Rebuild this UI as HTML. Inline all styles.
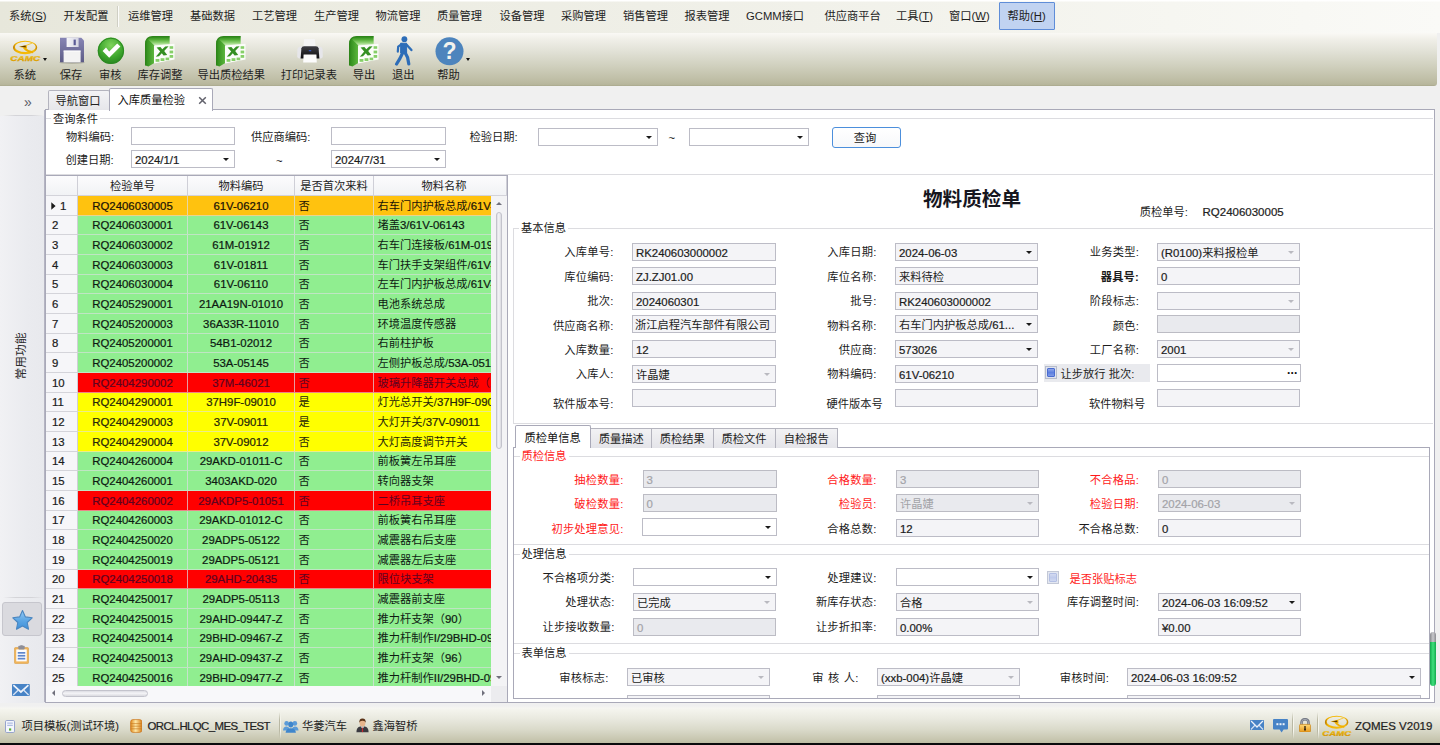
<!DOCTYPE html>
<html lang="zh-CN"><head><meta charset="utf-8"><title>入库质量检验</title>
<style>
*{box-sizing:border-box;margin:0;padding:0}
html,body{width:1440px;height:745px;overflow:hidden;background:#f0f0f0}
body{font-family:"Liberation Sans","Noto Sans CJK SC",sans-serif;font-size:11.25px;color:#222;line-height:1}
#app{position:relative;width:1440px;height:745px;overflow:hidden;background:#f0f0f0}
.a{position:absolute;white-space:nowrap}
.n{font-size:11.4px;-webkit-text-stroke:.22px}
.t{position:absolute;white-space:nowrap;height:16px;line-height:16px}
.r{text-align:right}
.c{text-align:center}
/* menu */
#menubar{left:0;top:0;width:1440px;height:33px;background:linear-gradient(180deg,#fff 0,#fff 1px,rgba(255,255,255,.5) 1px,rgba(255,255,255,.5) 2px,rgba(255,255,255,0) 2px),linear-gradient(90deg,#e7e7db 0%,#ecece2 25%,#efefe7 45%,#f4f4ee 72%,#fafaf7 100%)}
.mi{top:8px;height:16px;line-height:16px;font-size:11.25px;color:#1e1e1e}
#toolbar{left:0;top:33px;width:1437px;height:53px;background:linear-gradient(180deg,#faf9f5 0%,#f0efe8 12%,#e1e1d6 35%,#d0d0be 62%,#bfbea6 88%,#b7b69c 97%,#a9a88c 100%);border-bottom-right-radius:3px}
.tl{top:67px;height:16px;line-height:16px;font-size:11.25px;color:#1e1e1e;text-align:center}
/* inputs */
.in{position:absolute;height:18px;border:1px solid #bcbcc6;background:#f4f4f7;font-size:11.4px;line-height:16px;padding-top:1px;padding-left:3px;-webkit-text-stroke:.2px;white-space:nowrap;overflow:hidden;color:#1c1c1c}
.in.w{background:#fff}
.in.d{background:#e9eaee;color:#a3a3a8;border-color:#bcbcc4}
.in .cj{font-size:11.25px;-webkit-text-stroke:0}
.ar{position:absolute;right:5px;top:7px;width:0;height:0;border-left:3px solid transparent;border-right:3px solid transparent;border-top:3.5px solid #1a1a1a}
.ar.g{border-top-color:#b9b9c0}
.lb{position:absolute;height:16px;line-height:16px;white-space:nowrap;text-align:right;color:#1c1c1c;letter-spacing:.2px}
.red{color:#ff1a1a}
.gl{position:absolute;height:1px;background:#dcdce0}
.gv{position:absolute;width:1px;background:#dcdce0}
.gt{position:absolute;height:14px;line-height:14px;background:#fff;padding:0 2px;white-space:nowrap}
/* grid */
.gh{position:absolute;top:176px;height:20px;line-height:21px;text-align:center;background:linear-gradient(180deg,#fcfcfd,#f1f2f5);border-right:1px solid #cfcfd7;border-bottom:1px solid #d3d3da}
.row{position:absolute;left:46px;width:445px}
.cell{position:absolute;top:0;height:100%;white-space:nowrap;overflow:hidden;border-right:1px solid rgba(222,222,228,.7);border-bottom:1px solid rgba(222,222,228,.6)}
.ind{background:#f6f6f9;border-right:1px solid #cfcfd6;border-bottom:1px solid #d4d4da;padding-left:6px;font-size:11.4px;-webkit-text-stroke:.22px}

</style></head>
<body>
<div id="app">
<div class="a" id="menubar"></div>
<div class="a mi" style="left:9px">系统(<u>S</u>)</div>
<div class="a mi" style="left:63.5px">开发配置</div>
<div class="a mi" style="left:128px">运维管理</div>
<div class="a mi" style="left:190px">基础数据</div>
<div class="a mi" style="left:252px">工艺管理</div>
<div class="a mi" style="left:314px">生产管理</div>
<div class="a mi" style="left:375.5px">物流管理</div>
<div class="a mi" style="left:437px">质量管理</div>
<div class="a mi" style="left:499.5px">设备管理</div>
<div class="a mi" style="left:561px">采购管理</div>
<div class="a mi" style="left:623px">销售管理</div>
<div class="a mi" style="left:684.5px">报表管理</div>
<div class="a mi" style="left:746px">GCMM接口</div>
<div class="a mi" style="left:824.5px">供应商平台</div>
<div class="a mi" style="left:896px">工具(<u>T</u>)</div>
<div class="a mi" style="left:949px">窗口(<u>W</u>)</div>
<div class="a" style="left:117px;top:6px;width:1px;height:21px;background:#cfcfc4"></div><div class="a" style="left:118px;top:6px;width:1px;height:21px;background:#fcfcfa"></div>
<div class="a" style="left:999px;top:2px;width:56px;height:28px;background:#c1d3f1;border:1px solid #5f8dd8;border-radius:1px"></div>
<div class="a mi" style="left:1007.5px">帮助(<u>H</u>)</div>
<div class="a" id="toolbar"></div>
<div class="a tl" style="left:-25.2px;width:100px">系统</div>
<div class="a tl" style="left:21.1px;width:100px">保存</div>
<div class="a tl" style="left:60.2px;width:100px">审核</div>
<div class="a tl" style="left:110px;width:100px">库存调整</div>
<div class="a tl" style="left:181.3px;width:100px">导出质检结果</div>
<div class="a tl" style="left:258.8px;width:100px">打印记录表</div>
<div class="a tl" style="left:314px;width:100px">导出</div>
<div class="a tl" style="left:353.3px;width:100px">退出</div>
<div class="a tl" style="left:398.4px;width:100px">帮助</div>
<div class="a" style="left:43.3px;top:58.3px;width:0;height:0;border-left:2.6px solid transparent;border-right:2.6px solid transparent;border-top:3.2px solid #111"></div>
<div class="a" style="left:465.7px;top:58.3px;width:0;height:0;border-left:2.6px solid transparent;border-right:2.6px solid transparent;border-top:3.2px solid #111"></div>
<svg class="a" style="left:9px;top:40.2px" width="32" height="22" viewBox="0 0 32 22"><defs><linearGradient id="c1g" x1="0" y1="0" x2="0" y2="1"><stop offset="0" stop-color="#ffe26a"/><stop offset=".45" stop-color="#f5bb0a"/><stop offset="1" stop-color="#d18c00"/></linearGradient><linearGradient id="c1h" x1="0" y1="0" x2="1" y2="0"><stop offset="0" stop-color="#b87800"/><stop offset=".12" stop-color="#f2b400"/><stop offset=".85" stop-color="#f6be10"/><stop offset="1" stop-color="#c88600"/></linearGradient></defs><path fill-rule="evenodd" fill="url(#c1h)" d="M4 7.45 A12.1 6.75 0 1 0 28.2 7.45 A12.1 6.75 0 1 0 4 7.45 Z M5.9 6.9 A10.4 5.2 0 1 1 26.7 6.9 A10.4 5.2 0 1 1 5.9 6.9 Z"/><path d="M15.2 8 Q18.4 11.6 23.4 12.2" fill="none" stroke="#f0b000" stroke-width="1.9" stroke-linecap="round"/><path d="M17.2 5.4 L23.6 2.9" fill="none" stroke="#f3c640" stroke-width="1"/><path d="M9.6 6.7 L17.6 4.9 L18.1 8.5 Z" fill="#f0b000"/><path d="M10.8 6.6 L16.6 5.6 L16.9 7.6 Z" fill="#5e3a00"/><text x="16.3" y="21.3" text-anchor="middle" font-family="Liberation Sans,sans-serif" font-weight="bold" font-style="italic" font-size="6.8" textLength="30" lengthAdjust="spacingAndGlyphs" fill="url(#c1g)" stroke="#d49a00" stroke-width=".25">CAMC</text></svg>
<svg class="a" style="left:58.5px;top:36.8px" width="26" height="27" viewBox="0 0 26 27"><defs><linearGradient id="fl" x1="0" y1="0" x2="0" y2="1"><stop offset="0" stop-color="#8785b5"/><stop offset="1" stop-color="#5c5b85"/></linearGradient><linearGradient id="fl2" x1="0" y1="0" x2="1" y2="0"><stop offset="0" stop-color="#f6f6fa"/><stop offset="1" stop-color="#d5d5e2"/></linearGradient></defs><ellipse cx="13" cy="25.6" rx="13" ry="1.3" fill="#8c8b7a" opacity=".45"/><path d="M1 0.8 H22.3 L25 3.5 V25.3 H1 Z" fill="url(#fl)"/><rect x="7.6" y="0.8" width="12" height="9.2" fill="url(#fl2)"/><rect x="14.6" y="2.6" width="2.2" height="5.6" fill="#5a5a96"/><rect x="4.6" y="13.6" width="17" height="11.7" fill="#f3f3f3"/><rect x="4.6" y="13.6" width="17" height="1" fill="#fff"/></svg>
<svg class="a" style="left:96.6px;top:37px" width="28" height="28" viewBox="0 0 28 28"><defs><radialGradient id="gc" cx=".5" cy=".3" r=".75"><stop offset="0" stop-color="#7fd45c"/><stop offset=".6" stop-color="#3da62d"/><stop offset="1" stop-color="#237f1d"/></radialGradient></defs><circle cx="13.9" cy="13.8" r="13.2" fill="url(#gc)"/><circle cx="13.9" cy="13.8" r="12.6" fill="none" stroke="#2c8a22" stroke-width="1"/><path d="M5.6 14 L9 10.6 L12.2 14.6 L20.2 6.4 L23.4 9.4 L12.2 20.8 Z" fill="#fff"/></svg>
<svg class="a" style="left:145px;top:35.5px" width="30" height="31" viewBox="0 0 30 31"><defs><linearGradient id="xa145" x1="0" y1="0" x2="1" y2="0"><stop offset="0" stop-color="#2f8a1c"/><stop offset=".3" stop-color="#55b038"/><stop offset=".6" stop-color="#8fd272"/><stop offset="1" stop-color="#e4f5da"/></linearGradient><linearGradient id="xb145" x1="0" y1="0" x2="0" y2="1"><stop offset="0" stop-color="#2f8a1c"/><stop offset=".3" stop-color="#4faa33"/><stop offset=".65" stop-color="#8fd272"/><stop offset="1" stop-color="#e4f5da"/></linearGradient></defs><path d="M0.6 29.4 V8 Q0.6 0.6 8 0.6 H24.6 V10 H11 V26 L3.4 30.6 Z" fill="url(#xa145)"/><path d="M3.2 3.4 Q5 0.6 8 0.6 H24.6 V10 H10 Z" fill="url(#xb145)"/><path d="M0.6 29.4 V8 Q0.6 0.6 8 0.6 H24.6" fill="none" stroke="#2d8519" stroke-width="1.2"/><path d="M9 9.6 L29.5 7.8 V23.6 L9 27.6 Z" fill="#fbfdf9"/><path d="M11.6 11.4 L15.4 11 L17.3 13.2 L20.2 10.5 L23.6 10.2 L19.2 14.9 L22.2 19 L18.6 19.5 L16.8 17.2 L14 20.2 L10.8 20.7 L15.2 15.6 Z" fill="#348f22"/><g fill="#86cf68"><rect x="24.6" y="10.2" width="3.6" height="2.6"/><rect x="24.6" y="14.6" width="3.6" height="2.8"/><rect x="24.6" y="19" width="3.6" height="2.8"/><rect x="10.6" y="23" width="3.8" height="2.8"/><rect x="15.6" y="22.2" width="3.8" height="2.8"/><rect x="20.6" y="21.6" width="3.6" height="2.6"/></g></svg>
<svg class="a" style="left:216px;top:35.5px" width="30" height="31" viewBox="0 0 30 31"><defs><linearGradient id="xa216" x1="0" y1="0" x2="1" y2="0"><stop offset="0" stop-color="#2f8a1c"/><stop offset=".3" stop-color="#55b038"/><stop offset=".6" stop-color="#8fd272"/><stop offset="1" stop-color="#e4f5da"/></linearGradient><linearGradient id="xb216" x1="0" y1="0" x2="0" y2="1"><stop offset="0" stop-color="#2f8a1c"/><stop offset=".3" stop-color="#4faa33"/><stop offset=".65" stop-color="#8fd272"/><stop offset="1" stop-color="#e4f5da"/></linearGradient></defs><path d="M0.6 29.4 V8 Q0.6 0.6 8 0.6 H24.6 V10 H11 V26 L3.4 30.6 Z" fill="url(#xa216)"/><path d="M3.2 3.4 Q5 0.6 8 0.6 H24.6 V10 H10 Z" fill="url(#xb216)"/><path d="M0.6 29.4 V8 Q0.6 0.6 8 0.6 H24.6" fill="none" stroke="#2d8519" stroke-width="1.2"/><path d="M9 9.6 L29.5 7.8 V23.6 L9 27.6 Z" fill="#fbfdf9"/><path d="M11.6 11.4 L15.4 11 L17.3 13.2 L20.2 10.5 L23.6 10.2 L19.2 14.9 L22.2 19 L18.6 19.5 L16.8 17.2 L14 20.2 L10.8 20.7 L15.2 15.6 Z" fill="#348f22"/><g fill="#86cf68"><rect x="24.6" y="10.2" width="3.6" height="2.6"/><rect x="24.6" y="14.6" width="3.6" height="2.8"/><rect x="24.6" y="19" width="3.6" height="2.8"/><rect x="10.6" y="23" width="3.8" height="2.8"/><rect x="15.6" y="22.2" width="3.8" height="2.8"/><rect x="20.6" y="21.6" width="3.6" height="2.6"/></g></svg>
<svg class="a" style="left:349.2px;top:35.5px" width="30" height="31" viewBox="0 0 30 31"><defs><linearGradient id="xa349" x1="0" y1="0" x2="1" y2="0"><stop offset="0" stop-color="#2f8a1c"/><stop offset=".3" stop-color="#55b038"/><stop offset=".6" stop-color="#8fd272"/><stop offset="1" stop-color="#e4f5da"/></linearGradient><linearGradient id="xb349" x1="0" y1="0" x2="0" y2="1"><stop offset="0" stop-color="#2f8a1c"/><stop offset=".3" stop-color="#4faa33"/><stop offset=".65" stop-color="#8fd272"/><stop offset="1" stop-color="#e4f5da"/></linearGradient></defs><path d="M0.6 29.4 V8 Q0.6 0.6 8 0.6 H24.6 V10 H11 V26 L3.4 30.6 Z" fill="url(#xa349)"/><path d="M3.2 3.4 Q5 0.6 8 0.6 H24.6 V10 H10 Z" fill="url(#xb349)"/><path d="M0.6 29.4 V8 Q0.6 0.6 8 0.6 H24.6" fill="none" stroke="#2d8519" stroke-width="1.2"/><path d="M9 9.6 L29.5 7.8 V23.6 L9 27.6 Z" fill="#fbfdf9"/><path d="M11.6 11.4 L15.4 11 L17.3 13.2 L20.2 10.5 L23.6 10.2 L19.2 14.9 L22.2 19 L18.6 19.5 L16.8 17.2 L14 20.2 L10.8 20.7 L15.2 15.6 Z" fill="#348f22"/><g fill="#86cf68"><rect x="24.6" y="10.2" width="3.6" height="2.6"/><rect x="24.6" y="14.6" width="3.6" height="2.8"/><rect x="24.6" y="19" width="3.6" height="2.8"/><rect x="10.6" y="23" width="3.8" height="2.8"/><rect x="15.6" y="22.2" width="3.8" height="2.8"/><rect x="20.6" y="21.6" width="3.6" height="2.6"/></g></svg>
<svg class="a" style="left:295.5px;top:37.5px" width="28" height="26" viewBox="0 0 28 26"><defs><linearGradient id="pr" x1="0" y1="0" x2="0" y2="1"><stop offset="0" stop-color="#3d3d42"/><stop offset="1" stop-color="#0d0d10"/></linearGradient></defs><path d="M8.2 1 H18.8 L19.8 10 H7.2 Z" fill="#f4f4f4"/><path d="M1.4 11.6 Q1.8 8.8 5 8.6 L23 8.6 Q26.2 8.8 26.6 11.6 L26.8 18.4 Q26.6 20.4 24.4 20.4 H3.6 Q1.4 20.4 1.2 18.4 Z" fill="#e6e6ea"/><path d="M5.4 10.2 Q5.8 8.2 8 8.2 H20 Q22.2 8.2 22.6 10.2 L23.4 20.6 H4.6 Z" fill="url(#pr)"/><rect x="12.8" y="12.2" width="2.4" height="1" fill="#3b62d8"/><path d="M7.6 16.6 H20.4 L20.8 24.6 H7.2 Z" fill="#fcfcfc"/></svg>
<svg class="a" style="left:393.5px;top:35.5px" width="20" height="30" viewBox="0 0 20 30"><g fill="#2d6db8" stroke="#2d6db8" stroke-linejoin="round" stroke-linecap="round"><circle cx="10.4" cy="3.2" r="2.9" stroke="none"/><path d="M7 7.2 H12.6 V17 H7 Z" stroke-width="1"/><path d="M7.6 8.2 L4.2 10.6 L3.8 15.6" fill="none" stroke-width="2.2"/><path d="M12.6 8.8 L17.4 14" fill="none" stroke-width="2.4"/><path d="M8.6 17 L6 22.4 L2.6 28" fill="none" stroke-width="3.2"/><path d="M11 16.6 L13.6 21.6 L14.8 28" fill="none" stroke-width="3.2"/></g></svg>
<svg class="a" style="left:434.5px;top:36.5px" width="29" height="29" viewBox="0 0 29 29"><circle cx="14.5" cy="14.3" r="14" fill="#4d84bd"/><text x="14.5" y="22.4" text-anchor="middle" font-family="Liberation Sans,sans-serif" font-weight="bold" font-size="23" fill="#f3f3ee">?</text></svg>
<div class="a" style="left:0;top:116px;width:45px;height:587px;background:linear-gradient(90deg,#f1f1f4,#eaebef 60%,#e8e9ed)"></div>
<div class="a" style="left:44px;top:110px;width:1px;height:592px;background:#b4b4c2"></div>
<div class="a" style="left:24px;top:94px;font-size:14px;color:#5a5a66;height:16px;line-height:16px">»</div>
<div class="a" style="left:3px;top:115px;width:41px;height:1px;background:linear-gradient(90deg,rgba(210,210,214,0),#d4d4d8 30%,#d4d4d8 70%,rgba(210,210,214,0))"></div>
<div class="a" style="left:3px;top:597px;width:41px;height:1px;background:linear-gradient(90deg,rgba(210,210,214,0),#d4d4d8 30%,#d4d4d8 70%,rgba(210,210,214,0))"></div>
<div class="a" style="left:-4px;top:348px;width:50px;height:16px;line-height:16px;text-align:center;transform:rotate(-90deg);font-size:11.7px;color:#2a2a2a">常用功能</div>
<div class="a" style="left:2px;top:602px;width:40px;height:34px;background:#dadadf;border:1px solid #c6c6cd;border-radius:3px"></div>
<svg class="a" style="left:10.5px;top:608.5px" width="23" height="22" viewBox="0 0 23 22"><defs><linearGradient id="st" x1="0" y1="0" x2="0" y2="1"><stop offset="0" stop-color="#95c9f3"/><stop offset=".55" stop-color="#5aa5e4"/><stop offset="1" stop-color="#3f8fd8"/></linearGradient></defs><path d="M11.5 1.6 L14.4 7.9 L21.2 8.8 L16.2 13.5 L17.5 20.2 L11.5 16.9 L5.5 20.2 L6.8 13.5 L1.8 8.8 L8.6 7.9 Z" fill="url(#st)" stroke="#4a86c0" stroke-width="1.1" stroke-linejoin="round"/></svg>
<svg class="a" style="left:14.2px;top:644.5px" width="15" height="19" viewBox="0 0 16 19" preserveAspectRatio="none"><rect x="0.5" y="2.6" width="15" height="16" rx="1" fill="#f0b45a" stroke="#d79a3e" stroke-width=".6"/><rect x="2.4" y="4.4" width="11.2" height="12" fill="#fbfbfd"/><rect x="4.6" y="0.8" width="6.8" height="3.6" rx=".8" fill="#8f8f98"/><rect x="6.6" y="0.2" width="2.8" height="1.6" rx=".6" fill="#8f8f98"/><g fill="#5f86cc"><rect x="4" y="7" width="8" height="1.7"/><rect x="4" y="9.9" width="8" height="1.7"/><rect x="4" y="12.8" width="8" height="1.7"/></g></svg>
<svg class="a" style="left:12.4px;top:684px" width="17.8" height="12" viewBox="0 0 18 12" preserveAspectRatio="none"><rect x="0" y="0" width="18" height="12" rx=".9" fill="#4783c6"/><path d="M1.4 1.2 L9 8 L16.6 1.2" fill="none" stroke="#eef3fb" stroke-width="1.7"/><path d="M1.2 11 L6.6 5.8 M16.8 11 L11.4 5.8" fill="none" stroke="#d5e2f4" stroke-width="1.4"/></svg>
<div class="a" style="left:45px;top:109px;width:1389.5px;height:594px;background:#fff;border:1px solid #a9a9b8"></div>
<div class="a" style="left:48px;top:90px;width:62px;height:20px;background:linear-gradient(180deg,#f3f3f5,#e6e6ea);border:1px solid #b4b4be;border-bottom:none;border-radius:2px 2px 0 0"></div>
<div class="t" style="left:55.5px;top:92.5px">导航窗口</div>
<div class="a" style="left:109px;top:88px;width:104px;height:23px;background:#fff;border:1px solid #a9a9b8;border-bottom:none;border-radius:2px 2px 0 0"></div>
<div class="t" style="left:117.5px;top:91.5px;color:#111">入库质量检验</div>
<svg class="a" style="left:197.5px;top:95.5px" width="9" height="9" viewBox="0 0 9 9"><path d="M1.2 1.2 L7.8 7.8 M7.8 1.2 L1.2 7.8" stroke="#62626c" stroke-width="1.5" fill="none"/></svg>
<div class="gl" style="left:46px;top:118px;width:1387px"></div>
<div class="gl" style="left:46px;top:174px;width:1387px"></div>
<div class="gt" style="left:51px;top:111.5px">查询条件</div>
<div class="t" style="left:66px;top:129px">物料编码:</div>
<div class="in w" style="left:131px;top:127px;width:104px"></div>
<div class="t" style="left:251px;top:129px">供应商编码:</div>
<div class="in w" style="left:331px;top:127px;width:115px"></div>
<div class="t" style="left:469.5px;top:129px">检验日期:</div>
<div class="in w" style="left:538px;top:127.5px;width:120px"><i class="ar"></i></div>
<div class="t" style="left:668.5px;top:130px">~</div>
<div class="in w" style="left:689px;top:127.5px;width:119.5px"><i class="ar"></i></div>
<div class="a" style="left:832px;top:127px;width:69px;height:21px;border:1px solid #4c8fdc;border-radius:3px;background:linear-gradient(180deg,#fff,#f7f8fa);text-align:center;line-height:20px;padding-right:3px">查询</div>
<div class="t" style="left:65.5px;top:152px">创建日期:</div>
<div class="in w" style="left:131px;top:150px;width:104px">2024/1/1<i class="ar"></i></div>
<div class="t" style="left:276px;top:153px">~</div>
<div class="in w" style="left:331px;top:150px;width:115px">2024/7/31<i class="ar"></i></div>
<div class="a" style="left:45px;top:175px;width:463px;height:527.5px;background:#fff;border:1px solid #a9a9b8"></div>
<div class="gh" style="left:46px;width:32px"></div>
<div class="gh" style="left:78px;width:110px">检验单号</div>
<div class="gh" style="left:188px;width:107px">物料编码</div>
<div class="gh" style="left:295px;width:79px">是否首次来料</div>
<div class="gh" style="left:374px;width:133px;padding-left:8px">物料名称</div>
<div class="row" style="top:196px;height:20px;line-height:20px;color:#1a1206"><div class="cell ind" style="left:0;width:32px;color:#1c1c1c"><svg width="5" height="8" viewBox="0 0 5 8" style="position:absolute;left:5px;top:5.5px"><path d="M0.3 0.3 L4.6 4 L0.3 7.7 Z" fill="#1a1a1a"/></svg><span style="padding-left:8px">1</span></div><div class="cell n c" style="left:32px;width:110px;background:#ffc20f">RQ2406030005</div><div class="cell n c" style="left:142px;width:107px;background:#ffc20f">61V-06210</div><div class="cell" style="left:249px;width:79px;background:#ffc20f;padding-left:3.5px">否</div><div class="cell" style="left:328px;width:117px;background:#ffc20f;padding-left:3.5px;border-right:none">右车门内护板总成/<span class=n>61V-06210</span></div></div>
<div class="row" style="top:216px;height:19px;line-height:19px;color:#0e1a12"><div class="cell ind" style="left:0;width:32px;color:#1c1c1c">2</div><div class="cell n c" style="left:32px;width:110px;background:#90ee90">RQ2406030001</div><div class="cell n c" style="left:142px;width:107px;background:#90ee90">61V-06143</div><div class="cell" style="left:249px;width:79px;background:#90ee90;padding-left:3.5px">否</div><div class="cell" style="left:328px;width:117px;background:#90ee90;padding-left:3.5px;border-right:none">堵盖<span class=n>3/61V-06143</span></div></div>
<div class="row" style="top:235px;height:20px;line-height:20px;color:#0e1a12"><div class="cell ind" style="left:0;width:32px;color:#1c1c1c">3</div><div class="cell n c" style="left:32px;width:110px;background:#90ee90">RQ2406030002</div><div class="cell n c" style="left:142px;width:107px;background:#90ee90">61M-01912</div><div class="cell" style="left:249px;width:79px;background:#90ee90;padding-left:3.5px">否</div><div class="cell" style="left:328px;width:117px;background:#90ee90;padding-left:3.5px;border-right:none">右车门连接板/<span class=n>61M-01912</span></div></div>
<div class="row" style="top:255px;height:20px;line-height:20px;color:#0e1a12"><div class="cell ind" style="left:0;width:32px;color:#1c1c1c">4</div><div class="cell n c" style="left:32px;width:110px;background:#90ee90">RQ2406030003</div><div class="cell n c" style="left:142px;width:107px;background:#90ee90">61V-01811</div><div class="cell" style="left:249px;width:79px;background:#90ee90;padding-left:3.5px">否</div><div class="cell" style="left:328px;width:117px;background:#90ee90;padding-left:3.5px;border-right:none">车门扶手支架组件/<span class=n>61V-01811</span></div></div>
<div class="row" style="top:275px;height:19px;line-height:19px;color:#0e1a12"><div class="cell ind" style="left:0;width:32px;color:#1c1c1c">5</div><div class="cell n c" style="left:32px;width:110px;background:#90ee90">RQ2406030004</div><div class="cell n c" style="left:142px;width:107px;background:#90ee90">61V-06110</div><div class="cell" style="left:249px;width:79px;background:#90ee90;padding-left:3.5px">否</div><div class="cell" style="left:328px;width:117px;background:#90ee90;padding-left:3.5px;border-right:none">左车门内护板总成/<span class=n>61V-06110</span></div></div>
<div class="row" style="top:294px;height:20px;line-height:20px;color:#0e1a12"><div class="cell ind" style="left:0;width:32px;color:#1c1c1c">6</div><div class="cell n c" style="left:32px;width:110px;background:#90ee90">RQ2405290001</div><div class="cell n c" style="left:142px;width:107px;background:#90ee90">21AA19N-01010</div><div class="cell" style="left:249px;width:79px;background:#90ee90;padding-left:3.5px">否</div><div class="cell" style="left:328px;width:117px;background:#90ee90;padding-left:3.5px;border-right:none">电池系统总成</div></div>
<div class="row" style="top:314px;height:20px;line-height:20px;color:#0e1a12"><div class="cell ind" style="left:0;width:32px;color:#1c1c1c">7</div><div class="cell n c" style="left:32px;width:110px;background:#90ee90">RQ2405200003</div><div class="cell n c" style="left:142px;width:107px;background:#90ee90">36A33R-11010</div><div class="cell" style="left:249px;width:79px;background:#90ee90;padding-left:3.5px">否</div><div class="cell" style="left:328px;width:117px;background:#90ee90;padding-left:3.5px;border-right:none">环境温度传感器</div></div>
<div class="row" style="top:334px;height:19px;line-height:19px;color:#0e1a12"><div class="cell ind" style="left:0;width:32px;color:#1c1c1c">8</div><div class="cell n c" style="left:32px;width:110px;background:#90ee90">RQ2405200001</div><div class="cell n c" style="left:142px;width:107px;background:#90ee90">54B1-02012</div><div class="cell" style="left:249px;width:79px;background:#90ee90;padding-left:3.5px">否</div><div class="cell" style="left:328px;width:117px;background:#90ee90;padding-left:3.5px;border-right:none">右前柱护板</div></div>
<div class="row" style="top:353px;height:20px;line-height:20px;color:#0e1a12"><div class="cell ind" style="left:0;width:32px;color:#1c1c1c">9</div><div class="cell n c" style="left:32px;width:110px;background:#90ee90">RQ2405200002</div><div class="cell n c" style="left:142px;width:107px;background:#90ee90">53A-05145</div><div class="cell" style="left:249px;width:79px;background:#90ee90;padding-left:3.5px">否</div><div class="cell" style="left:328px;width:117px;background:#90ee90;padding-left:3.5px;border-right:none">左侧护板总成/<span class=n>53A-05145</span></div></div>
<div class="row" style="top:373px;height:20px;line-height:20px;color:#5e0320"><div class="cell ind" style="left:0;width:32px;color:#1c1c1c">10</div><div class="cell n c" style="left:32px;width:110px;background:#ff0000">RQ2404290002</div><div class="cell n c" style="left:142px;width:107px;background:#ff0000">37M-46021</div><div class="cell" style="left:249px;width:79px;background:#ff0000;padding-left:3.5px">否</div><div class="cell" style="left:328px;width:117px;background:#ff0000;padding-left:3.5px;border-right:none">玻璃升降器开关总成（左）</div></div>
<div class="row" style="top:393px;height:19px;line-height:19px;color:#26260a"><div class="cell ind" style="left:0;width:32px;color:#1c1c1c">11</div><div class="cell n c" style="left:32px;width:110px;background:#ffff00">RQ2404290001</div><div class="cell n c" style="left:142px;width:107px;background:#ffff00">37H9F-09010</div><div class="cell" style="left:249px;width:79px;background:#ffff00;padding-left:3.5px">是</div><div class="cell" style="left:328px;width:117px;background:#ffff00;padding-left:3.5px;border-right:none">灯光总开关/<span class=n>37H9F-09010</span></div></div>
<div class="row" style="top:412px;height:20px;line-height:20px;color:#26260a"><div class="cell ind" style="left:0;width:32px;color:#1c1c1c">12</div><div class="cell n c" style="left:32px;width:110px;background:#ffff00">RQ2404290003</div><div class="cell n c" style="left:142px;width:107px;background:#ffff00">37V-09011</div><div class="cell" style="left:249px;width:79px;background:#ffff00;padding-left:3.5px">是</div><div class="cell" style="left:328px;width:117px;background:#ffff00;padding-left:3.5px;border-right:none">大灯开关/<span class=n>37V-09011</span></div></div>
<div class="row" style="top:432px;height:20px;line-height:20px;color:#26260a"><div class="cell ind" style="left:0;width:32px;color:#1c1c1c">13</div><div class="cell n c" style="left:32px;width:110px;background:#ffff00">RQ2404290004</div><div class="cell n c" style="left:142px;width:107px;background:#ffff00">37V-09012</div><div class="cell" style="left:249px;width:79px;background:#ffff00;padding-left:3.5px">否</div><div class="cell" style="left:328px;width:117px;background:#ffff00;padding-left:3.5px;border-right:none">大灯高度调节开关</div></div>
<div class="row" style="top:452px;height:19px;line-height:19px;color:#0e1a12"><div class="cell ind" style="left:0;width:32px;color:#1c1c1c">14</div><div class="cell n c" style="left:32px;width:110px;background:#90ee90">RQ2404260004</div><div class="cell n c" style="left:142px;width:107px;background:#90ee90">29AKD-01011-C</div><div class="cell" style="left:249px;width:79px;background:#90ee90;padding-left:3.5px">否</div><div class="cell" style="left:328px;width:117px;background:#90ee90;padding-left:3.5px;border-right:none">前板簧左吊耳座</div></div>
<div class="row" style="top:471px;height:20px;line-height:20px;color:#0e1a12"><div class="cell ind" style="left:0;width:32px;color:#1c1c1c">15</div><div class="cell n c" style="left:32px;width:110px;background:#90ee90">RQ2404260001</div><div class="cell n c" style="left:142px;width:107px;background:#90ee90">3403AKD-020</div><div class="cell" style="left:249px;width:79px;background:#90ee90;padding-left:3.5px">否</div><div class="cell" style="left:328px;width:117px;background:#90ee90;padding-left:3.5px;border-right:none">转向器支架</div></div>
<div class="row" style="top:491px;height:20px;line-height:20px;color:#5e0320"><div class="cell ind" style="left:0;width:32px;color:#1c1c1c">16</div><div class="cell n c" style="left:32px;width:110px;background:#ff0000">RQ2404260002</div><div class="cell n c" style="left:142px;width:107px;background:#ff0000">29AKDP5-01051</div><div class="cell" style="left:249px;width:79px;background:#ff0000;padding-left:3.5px">否</div><div class="cell" style="left:328px;width:117px;background:#ff0000;padding-left:3.5px;border-right:none">二桥吊耳支座</div></div>
<div class="row" style="top:511px;height:19px;line-height:19px;color:#0e1a12"><div class="cell ind" style="left:0;width:32px;color:#1c1c1c">17</div><div class="cell n c" style="left:32px;width:110px;background:#90ee90">RQ2404260003</div><div class="cell n c" style="left:142px;width:107px;background:#90ee90">29AKD-01012-C</div><div class="cell" style="left:249px;width:79px;background:#90ee90;padding-left:3.5px">否</div><div class="cell" style="left:328px;width:117px;background:#90ee90;padding-left:3.5px;border-right:none">前板簧右吊耳座</div></div>
<div class="row" style="top:530px;height:20px;line-height:20px;color:#0e1a12"><div class="cell ind" style="left:0;width:32px;color:#1c1c1c">18</div><div class="cell n c" style="left:32px;width:110px;background:#90ee90">RQ2404250020</div><div class="cell n c" style="left:142px;width:107px;background:#90ee90">29ADP5-05122</div><div class="cell" style="left:249px;width:79px;background:#90ee90;padding-left:3.5px">否</div><div class="cell" style="left:328px;width:117px;background:#90ee90;padding-left:3.5px;border-right:none">减震器右后支座</div></div>
<div class="row" style="top:550px;height:20px;line-height:20px;color:#0e1a12"><div class="cell ind" style="left:0;width:32px;color:#1c1c1c">19</div><div class="cell n c" style="left:32px;width:110px;background:#90ee90">RQ2404250019</div><div class="cell n c" style="left:142px;width:107px;background:#90ee90">29ADP5-05121</div><div class="cell" style="left:249px;width:79px;background:#90ee90;padding-left:3.5px">否</div><div class="cell" style="left:328px;width:117px;background:#90ee90;padding-left:3.5px;border-right:none">减震器左后支座</div></div>
<div class="row" style="top:570px;height:19px;line-height:19px;color:#5e0320"><div class="cell ind" style="left:0;width:32px;color:#1c1c1c">20</div><div class="cell n c" style="left:32px;width:110px;background:#ff0000">RQ2404250018</div><div class="cell n c" style="left:142px;width:107px;background:#ff0000">29AHD-20435</div><div class="cell" style="left:249px;width:79px;background:#ff0000;padding-left:3.5px">否</div><div class="cell" style="left:328px;width:117px;background:#ff0000;padding-left:3.5px;border-right:none">限位块支架</div></div>
<div class="row" style="top:589px;height:20px;line-height:20px;color:#0e1a12"><div class="cell ind" style="left:0;width:32px;color:#1c1c1c">21</div><div class="cell n c" style="left:32px;width:110px;background:#90ee90">RQ2404250017</div><div class="cell n c" style="left:142px;width:107px;background:#90ee90">29ADP5-05113</div><div class="cell" style="left:249px;width:79px;background:#90ee90;padding-left:3.5px">否</div><div class="cell" style="left:328px;width:117px;background:#90ee90;padding-left:3.5px;border-right:none">减震器前支座</div></div>
<div class="row" style="top:609px;height:20px;line-height:20px;color:#0e1a12"><div class="cell ind" style="left:0;width:32px;color:#1c1c1c">22</div><div class="cell n c" style="left:32px;width:110px;background:#90ee90">RQ2404250015</div><div class="cell n c" style="left:142px;width:107px;background:#90ee90">29AHD-09447-Z</div><div class="cell" style="left:249px;width:79px;background:#90ee90;padding-left:3.5px">否</div><div class="cell" style="left:328px;width:117px;background:#90ee90;padding-left:3.5px;border-right:none">推力杆支架（<span class=n>90</span>）</div></div>
<div class="row" style="top:629px;height:19px;line-height:19px;color:#0e1a12"><div class="cell ind" style="left:0;width:32px;color:#1c1c1c">23</div><div class="cell n c" style="left:32px;width:110px;background:#90ee90">RQ2404250014</div><div class="cell n c" style="left:142px;width:107px;background:#90ee90">29BHD-09467-Z</div><div class="cell" style="left:249px;width:79px;background:#90ee90;padding-left:3.5px">否</div><div class="cell" style="left:328px;width:117px;background:#90ee90;padding-left:3.5px;border-right:none">推力杆制作<span class=n>I/29BHD-09467-Z</span></div></div>
<div class="row" style="top:648px;height:20px;line-height:20px;color:#0e1a12"><div class="cell ind" style="left:0;width:32px;color:#1c1c1c">24</div><div class="cell n c" style="left:32px;width:110px;background:#90ee90">RQ2404250013</div><div class="cell n c" style="left:142px;width:107px;background:#90ee90">29AHD-09437-Z</div><div class="cell" style="left:249px;width:79px;background:#90ee90;padding-left:3.5px">否</div><div class="cell" style="left:328px;width:117px;background:#90ee90;padding-left:3.5px;border-right:none">推力杆支架（<span class=n>96</span>）</div></div>
<div class="row" style="top:668px;height:20px;line-height:20px;color:#0e1a12"><div class="cell ind" style="left:0;width:32px;color:#1c1c1c">25</div><div class="cell n c" style="left:32px;width:110px;background:#90ee90">RQ2404250016</div><div class="cell n c" style="left:142px;width:107px;background:#90ee90">29BHD-09477-Z</div><div class="cell" style="left:249px;width:79px;background:#90ee90;padding-left:3.5px">否</div><div class="cell" style="left:328px;width:117px;background:#90ee90;padding-left:3.5px;border-right:none">推力杆制作<span class=n>II/29BHD-09477-Z</span></div></div>
<div class="a" style="left:491px;top:196px;width:16px;height:490px;background:#f3f3f5"></div>
<div class="a" style="left:496px;top:212px;width:6px;height:237px;border-radius:3px;background:linear-gradient(90deg,#dcdce2,#f4f4f7 45%,#dadae0);border:1px solid #c3c3cc"></div>
<div class="a" style="left:495.8px;top:202.2px;width:0;height:0;border-left:3.2px solid transparent;border-right:3.2px solid transparent;border-bottom:3.6px solid #70707c"></div>
<div class="a" style="left:495.8px;top:675.8px;width:0;height:0;border-left:3.2px solid transparent;border-right:3.2px solid transparent;border-top:3.6px solid #70707c"></div>
<div class="a" style="left:46px;top:686px;width:445px;height:15.5px;background:#f8f8fa"></div>
<div class="a" style="left:491px;top:686px;width:16px;height:15.5px;background:#ececef"></div>
<div class="a" style="left:62px;top:690px;width:86px;height:7px;border-radius:3.5px;background:linear-gradient(180deg,#dcdce2,#f4f4f7 45%,#dadae0);border:1px solid #c3c3cc"></div>
<div class="a" style="left:52px;top:690.3px;width:0;height:0;border-top:3px solid transparent;border-bottom:3px solid transparent;border-right:3.4px solid #70707c"></div>
<div class="a" style="left:481.6px;top:690.3px;width:0;height:0;border-top:3px solid transparent;border-bottom:3px solid transparent;border-left:3.4px solid #70707c"></div>
<div class="a" style="left:872px;top:186px;width:200px;height:26px;line-height:26px;text-align:center;font-size:19.6px;font-weight:bold;color:#16161e">物料质检单</div>
<div class="t r" style="left:1088px;width:100px;top:204px">质检单号:</div>
<div class="t n" style="left:1202.5px;top:203.5px;font-size:11.5px">RQ2406030005</div>
<div class="gl" style="left:513px;top:228px;width:920px"></div>
<div class="gv" style="left:513px;top:228px;height:196px"></div>
<div class="gl" style="left:513px;top:423px;width:920px"></div>
<div class="gt" style="left:519px;top:221px">基本信息</div>
<div class="lb " style="left:503.5px;width:110px;top:244px">入库单号:</div>
<div class="in " style="left:632px;top:243px;width:143.5px;height:18px">RK240603000002</div>
<div class="lb " style="left:503.5px;width:110px;top:268.5px">库位编码:</div>
<div class="in " style="left:632px;top:267px;width:143.5px;height:18px">ZJ.ZJ01.00</div>
<div class="lb " style="left:503.5px;width:110px;top:293px">批次:</div>
<div class="in " style="left:632px;top:291.5px;width:143.5px;height:18px">2024060301</div>
<div class="lb " style="left:503.5px;width:110px;top:317.5px">供应商名称:</div>
<div class="in" style="left:632px;top:315px;width:144px;height:18px;padding-left:2px"><span class="cj">浙江启程汽车部件有限公司</span></div>
<div class="lb " style="left:503.5px;width:110px;top:341.5px">入库数量:</div>
<div class="in " style="left:632px;top:340px;width:143.5px;height:18px">12</div>
<div class="lb " style="left:503.5px;width:110px;top:366px">入库人:</div>
<div class="in " style="left:632px;top:365px;width:143.5px;height:18px"><span class="cj">许晶婕</span><i class="ar g"></i></div>
<div class="lb " style="left:503.5px;width:110px;top:395.5px">软件版本号:</div>
<div class="in " style="left:632px;top:389px;width:143.5px;height:18px"></div>
<div class="lb " style="left:766.5px;width:110px;top:244px">入库日期:</div>
<div class="in " style="left:895px;top:243px;width:142.5px;height:18px">2024-06-03<i class="ar"></i></div>
<div class="lb " style="left:766.5px;width:110px;top:268.5px">库位名称:</div>
<div class="in " style="left:895px;top:267px;width:142.5px;height:18px"><span class="cj">来料待检</span></div>
<div class="lb " style="left:766.5px;width:110px;top:293px">批号:</div>
<div class="in " style="left:895px;top:291.5px;width:142.5px;height:18px">RK240603000002</div>
<div class="lb " style="left:766.5px;width:110px;top:317.5px">物料名称:</div>
<div class="in " style="left:895px;top:315px;width:142.5px;height:18px"><span class="cj">右车门内护板总成</span>/61...<i class="ar"></i></div>
<div class="lb " style="left:766.5px;width:110px;top:341.5px">供应商:</div>
<div class="in " style="left:895px;top:340px;width:142.5px;height:18px">573026<i class="ar"></i></div>
<div class="lb " style="left:766.5px;width:110px;top:366px">物料编码:</div>
<div class="in " style="left:895px;top:365px;width:142.5px;height:18px">61V-06210</div>
<div class="t" style="left:826.5px;top:395.5px">硬件版本号</div>
<div class="in " style="left:895px;top:389px;width:142.5px;height:18px"></div>
<div class="lb " style="left:1029px;width:110px;top:244px">业务类型:</div>
<div class="in " style="left:1157px;top:243px;width:143px;height:18px">(R0100)<span class="cj">来料报检单</span><i class="ar g"></i></div>
<div class="lb" style="left:1029px;width:110px;top:268.5px;font-weight:bold">器具号:</div>
<div class="in " style="left:1157px;top:267px;width:143px;height:18px">0</div>
<div class="lb " style="left:1029px;width:110px;top:293px">阶段标志:</div>
<div class="in " style="left:1157px;top:291.5px;width:143px;height:18px"><i class="ar g"></i></div>
<div class="lb " style="left:1029px;width:110px;top:317.5px">颜色:</div>
<div class="in d" style="left:1157px;top:315px;width:143px;height:18px"></div>
<div class="lb " style="left:1029px;width:110px;top:341.5px">工厂名称:</div>
<div class="in " style="left:1157px;top:340px;width:143px;height:18px">2001<i class="ar g"></i></div>
<div class="a" style="left:1044px;top:364px;width:106px;height:17.5px;background:#e9eaee"></div>
<div class="a" style="left:1045px;top:366px;width:12px;height:13px;background:#dfe3ee;border:1px solid #b6bccb"></div>
<div class="a" style="left:1047px;top:368px;width:8px;height:9px;background:linear-gradient(180deg,#8fa6e8,#5c7fe0 50%,#7f9ae6);border:1px solid #4a6cd0;border-radius:1px"></div>
<div class="t" style="left:1060.5px;top:365.5px">让步放行 批次:</div>
<div class="in w" style="left:1156.5px;top:364px;width:144.5px;height:18px"></div>
<div class="a" style="left:1287px;top:366px;width:12px;height:16px;line-height:14px;font-weight:bold;font-size:12px;letter-spacing:-.5px;color:#111">···</div>
<div class="t" style="left:1089px;top:396px">软件物料号</div>
<div class="in " style="left:1157px;top:389px;width:143px;height:18px"></div>
<div class="a" style="left:513px;top:447px;width:917px;height:252px;background:#fff;border:1px solid #a9a9b8"></div>
<div class="a" style="left:590px;top:427.5px;width:62.5px;height:20px;line-height:21px;text-align:center;background:linear-gradient(180deg,#f2f2f4,#e4e4e9);border:1px solid #b4b4be;border-bottom:none">质量描述</div>
<div class="a" style="left:651px;top:427.5px;width:62.5px;height:20px;line-height:21px;text-align:center;background:linear-gradient(180deg,#f2f2f4,#e4e4e9);border:1px solid #b4b4be;border-bottom:none">质检结果</div>
<div class="a" style="left:712.5px;top:427.5px;width:63px;height:20px;line-height:21px;text-align:center;background:linear-gradient(180deg,#f2f2f4,#e4e4e9);border:1px solid #b4b4be;border-bottom:none">质检文件</div>
<div class="a" style="left:774.5px;top:427.5px;width:63.5px;height:20px;line-height:21px;text-align:center;background:linear-gradient(180deg,#f2f2f4,#e4e4e9);border:1px solid #b4b4be;border-bottom:none">自检报告</div>
<div class="a" style="left:515px;top:425px;width:75.5px;height:23px;line-height:25px;text-align:center;background:#fff;border:1px solid #a9a9b8;border-bottom:none;border-radius:2px 2px 0 0;color:#111">质检单信息</div>
<div class="gl" style="left:514px;top:455.5px;width:915px"></div>
<div class="gl" style="left:514px;top:544px;width:915px"></div>
<div class="gt red" style="left:519.5px;top:448.5px">质检信息</div>
<div class="lb red" style="left:513.5px;width:110px;top:471.5px">抽检数量:</div>
<div class="in d" style="left:642.5px;top:470px;width:134px;height:18px">3</div>
<div class="lb red" style="left:513.5px;width:110px;top:496px">破检数量:</div>
<div class="in d" style="left:642.5px;top:494px;width:134px;height:18px">0</div>
<div class="lb red" style="left:513.5px;width:110px;top:520.5px">初步处理意见:</div>
<div class="in w" style="left:641.5px;top:518px;width:135.5px;height:18px"><i class="ar"></i></div>
<div class="lb red" style="left:766.5px;width:110px;top:471.5px">合格数量:</div>
<div class="in d" style="left:896px;top:470px;width:142.5px;height:18px">3</div>
<div class="lb red" style="left:766.5px;width:110px;top:496px">检验员:</div>
<div class="in d" style="left:896px;top:494px;width:142.5px;height:18px"><span class="cj">许晶婕</span><i class="ar g"></i></div>
<div class="lb " style="left:766.5px;width:110px;top:520.5px">合格总数:</div>
<div class="in " style="left:896px;top:518.5px;width:142.5px;height:18px">12</div>
<div class="lb red" style="left:1029px;width:110px;top:471.5px">不合格品:</div>
<div class="in d" style="left:1158px;top:470px;width:142.5px;height:18px">0</div>
<div class="lb red" style="left:1029px;width:110px;top:496px">检验日期:</div>
<div class="in d" style="left:1158px;top:494px;width:142.5px;height:18px">2024-06-03<i class="ar g"></i></div>
<div class="lb " style="left:1029px;width:110px;top:520.5px">不合格总数:</div>
<div class="in " style="left:1158px;top:518.5px;width:142.5px;height:18px">0</div>
<div class="gl" style="left:514px;top:553.5px;width:915px"></div>
<div class="gl" style="left:514px;top:643px;width:915px"></div>
<div class="gt" style="left:519.5px;top:546.5px">处理信息</div>
<div class="lb " style="left:504.5px;width:110px;top:569.5px">不合格项分类:</div>
<div class="in w" style="left:632.5px;top:568px;width:144.5px;height:18px"><i class="ar"></i></div>
<div class="lb " style="left:504.5px;width:110px;top:594px">处理状态:</div>
<div class="in " style="left:633px;top:593px;width:143px;height:18px"><span class="cj">已完成</span><i class="ar g"></i></div>
<div class="lb " style="left:504.5px;width:110px;top:618.5px">让步接收数量:</div>
<div class="in d" style="left:633px;top:617.5px;width:143px;height:18px">0</div>
<div class="lb " style="left:766.5px;width:110px;top:569.5px">处理建议:</div>
<div class="in w" style="left:896px;top:568px;width:142.5px;height:18px"><i class="ar"></i></div>
<div class="lb " style="left:766.5px;width:110px;top:594px">新库存状态:</div>
<div class="in " style="left:896px;top:593px;width:142.5px;height:18px"><span class="cj">合格</span><i class="ar g"></i></div>
<div class="lb " style="left:766.5px;width:110px;top:618.5px">让步折扣率:</div>
<div class="in " style="left:896px;top:617.5px;width:142.5px;height:18px">0.00%</div>
<div class="a" style="left:1047px;top:571px;width:12px;height:12.5px;background:#e3e7f1;border:1px solid #c3c8d6"></div>
<div class="a" style="left:1049px;top:573px;width:8px;height:8.5px;background:linear-gradient(180deg,#d3daf0,#c0cbec 50%,#d0d8f0);border:1px solid #b3bfe4;border-radius:1px"></div>
<div class="t red" style="left:1069.5px;top:571px">是否张贴标志</div>
<div class="lb " style="left:1029px;width:110px;top:594px">库存调整时间:</div>
<div class="in " style="left:1158px;top:593px;width:142.5px;height:18px">2024-06-03 16:09:52<i class="ar"></i></div>
<div class="in " style="left:1158px;top:617.5px;width:142.5px;height:18px">¥0.00</div>
<div class="gl" style="left:514px;top:653px;width:915px"></div>
<div class="gt" style="left:519.5px;top:646px">表单信息</div>
<div class="lb " style="left:498.5px;width:110px;top:669.5px">审核标志:</div>
<div class="in " style="left:627px;top:668px;width:142.5px;height:18px"><span class="cj">已审核</span><i class="ar g"></i></div>
<div class="lb" style="left:748.5px;width:110px;top:669.5px;word-spacing:1px">审 核 人:</div>
<div class="in " style="left:877px;top:668px;width:142.5px;height:18px">(xxb-004)<span class="cj">许晶婕</span><i class="ar g"></i></div>
<div class="lb " style="left:999px;width:110px;top:669.5px">审核时间:</div>
<div class="in " style="left:1127px;top:668px;width:294px;height:18px">2024-06-03 16:09:52<i class="ar"></i></div>
<div class="in" style="left:627px;top:695px;width:142.5px;height:4px;border-bottom:none"></div>
<div class="in" style="left:877px;top:695px;width:142.5px;height:4px;border-bottom:none"></div>
<div class="in" style="left:1127px;top:695px;width:294px;height:4px;border-bottom:none"></div>
<div class="a" style="left:514px;top:698px;width:915px;height:1px;background:#a9a9b8"></div>
<div class="a" style="left:1430px;top:632px;width:6px;height:12px;border-radius:3px 3px 0 0;background:linear-gradient(90deg,#8a8a8e,#c9c9cc 50%,#8a8a8e)"></div>
<div class="a" style="left:1430px;top:642px;width:6px;height:44px;border-radius:0 0 3px 3px;background:linear-gradient(90deg,#12a84c,#3fe07c 50%,#12a84c)"></div>
<div class="a" style="left:0;top:706px;width:1440px;height:37px;background:linear-gradient(180deg,#f0f0f0 0%,#f6f6f1 6%,#f3f3ec 12%,#e9e9df 35%,#d9d9c9 65%,#c6c5ae 92%,#bdbca3 100%)"></div>
<div class="a" style="left:0;top:743px;width:1440px;height:2px;background:#0a0a0c"></div>
<svg class="a" style="left:5px;top:719.5px" width="10" height="13" viewBox="0 0 10 13"><rect x=".5" y=".5" width="9" height="12" rx="1.2" fill="#f4f6fc" stroke="#8d9cc9" stroke-width=".9"/><rect x="2.2" y="2.6" width="5.6" height="1" fill="#9fb0dc"/><rect x="2.2" y="4.8" width="5.6" height="1" fill="#9fb0dc"/><rect x="4" y="8.4" width="2.2" height="2.2" fill="#57b233"/></svg>
<div class="t" style="left:21.5px;top:718px">项目模板(测试环境)</div>
<svg class="a" style="left:129.5px;top:718.5px" width="12.5" height="14" viewBox="0 0 12.5 14"><defs><linearGradient id="db" x1="0" y1="0" x2="1" y2="0"><stop offset="0" stop-color="#e08a1e"/><stop offset=".45" stop-color="#ffe9a8"/><stop offset="1" stop-color="#d97f18"/></linearGradient></defs><rect x=".6" y=".6" width="11.3" height="12.8" rx="2.4" fill="url(#db)" stroke="#c8741a" stroke-width=".7"/><path d="M.8 4.6 H11.7 M.8 7.2 H11.7 M.8 9.8 H11.7" stroke="#c57a20" stroke-width=".8" opacity=".8"/></svg>
<div class="t n" style="left:147.5px;top:718px;font-size:11.4px;letter-spacing:-.58px">ORCL.HLQC_MES_TEST</div>
<div class="a" style="left:279px;top:712px;width:1px;height:27px;background:linear-gradient(180deg,rgba(170,170,150,0),#b9b8a4 30%,#b9b8a4 70%,rgba(170,170,150,0))"></div><div class="a" style="left:280px;top:712px;width:1px;height:27px;background:linear-gradient(180deg,rgba(255,255,255,0),#f6f6ee 30%,#f6f6ee 70%,rgba(255,255,255,0))"></div>
<svg class="a" style="left:283px;top:719.5px" width="15.5" height="13" viewBox="0 0 15.5 13"><g fill="#5b9bd8"><circle cx="3.6" cy="3.4" r="2.3"/><circle cx="11.9" cy="3.4" r="2.3"/><path d="M0 10.6 Q0.2 6.4 3.6 6.4 Q6 6.4 6.6 9 L6.6 10.6 Z"/><path d="M15.5 10.6 Q15.3 6.4 11.9 6.4 Q9.5 6.4 8.9 9 L8.9 10.6 Z"/></g><g fill="#3f86cc"><ellipse cx="7.75" cy="4.6" rx="2.5" ry="3"/><path d="M2.6 12.8 Q3 8.2 7.75 8.2 Q12.5 8.2 12.9 12.8 Z"/></g></svg>
<div class="t" style="left:302px;top:718px">华菱汽车</div>
<svg class="a" style="left:355.5px;top:718px" width="13" height="14.5" viewBox="0 0 13 14.5"><path d="M0.4 14.3 Q0.4 9.2 4.4 8.6 L8.6 8.6 Q12.6 9.2 12.6 14.3 Z" fill="#3a3a40"/><path d="M4.8 8.6 L6.5 11 L8.2 8.6 Z" fill="#f2f2f2"/><path d="M6.1 9.6 L6.9 9.6 L7.2 13.4 L6.5 14.2 L5.8 13.4 Z" fill="#c8282c"/><ellipse cx="6.5" cy="5" rx="2.9" ry="3.5" fill="#e7b58c"/><path d="M3.3 4.8 Q3 0.6 6.5 0.5 Q10 0.6 9.7 4.8 Q9 2.6 6.5 2.8 Q4 2.6 3.3 4.8 Z" fill="#5a3216"/></svg>
<div class="t" style="left:372.5px;top:718px">鑫海智桥</div>
<svg class="a" style="left:1250px;top:720px" width="14" height="10.4" viewBox="0 0 18 12" preserveAspectRatio="none"><rect x="0" y="0" width="18" height="12" rx=".9" fill="#4783c6"/><path d="M1.4 1.2 L9 8 L16.6 1.2" fill="none" stroke="#eef3fb" stroke-width="1.7"/><path d="M1.2 11 L6.6 5.8 M16.8 11 L11.4 5.8" fill="none" stroke="#d5e2f4" stroke-width="1.4"/></svg>
<svg class="a" style="left:1272.5px;top:719px" width="15" height="14" viewBox="0 0 15 14"><path d="M1 0 H14 Q15 0 15 1 V9.4 Q15 10.4 14 10.4 H10.6 L8.6 13.6 L6.6 10.4 H1 Q0 10.4 0 9.4 V1 Q0 0 1 0 Z" fill="#4783c6"/><g fill="#eef3fb"><rect x="3.4" y="4.2" width="2" height="2"/><rect x="6.5" y="4.2" width="2" height="2"/><rect x="9.6" y="4.2" width="2" height="2"/></g></svg>
<div class="a" style="left:1292px;top:712px;width:1px;height:27px;background:linear-gradient(180deg,rgba(170,170,150,0),#b9b8a4 30%,#b9b8a4 70%,rgba(170,170,150,0))"></div><div class="a" style="left:1293px;top:712px;width:1px;height:27px;background:linear-gradient(180deg,rgba(255,255,255,0),#f6f6ee 30%,#f6f6ee 70%,rgba(255,255,255,0))"></div>
<svg class="a" style="left:1299px;top:717.8px" width="12" height="14.4" viewBox="0 0 12 14.4"><defs><linearGradient id="lk" x1="0" y1="0" x2="0" y2="1"><stop offset="0" stop-color="#ffd977"/><stop offset="1" stop-color="#e89a1c"/></linearGradient></defs><path d="M2.5 7 V4.6 Q2.5 1.3 6 1.3 Q9.5 1.3 9.5 4.6 V7" fill="none" stroke="#6f747f" stroke-width="2.5"/><path d="M2.5 7 V4.6 Q2.5 1.3 6 1.3 Q9.5 1.3 9.5 4.6 V7" fill="none" stroke="#b4b8c2" stroke-width=".8"/><rect x=".5" y="6.4" width="11" height="7.6" rx="1" fill="url(#lk)" stroke="#c98518" stroke-width=".7"/><rect x="5.3" y="8" width="1.4" height="4.4" fill="#3b2a10"/><circle cx="6" cy="11.6" r="1" fill="#3b2a10"/></svg>
<div class="a" style="left:1317px;top:712px;width:1px;height:27px;background:linear-gradient(180deg,rgba(170,170,150,0),#b9b8a4 30%,#b9b8a4 70%,rgba(170,170,150,0))"></div><div class="a" style="left:1318px;top:712px;width:1px;height:27px;background:linear-gradient(180deg,rgba(255,255,255,0),#f6f6ee 30%,#f6f6ee 70%,rgba(255,255,255,0))"></div>
<svg class="a" style="left:1320.5px;top:715px" width="31" height="21.3" viewBox="0 0 32 22"><defs><linearGradient id="c2g" x1="0" y1="0" x2="0" y2="1"><stop offset="0" stop-color="#ffe26a"/><stop offset=".45" stop-color="#f5bb0a"/><stop offset="1" stop-color="#d18c00"/></linearGradient><linearGradient id="c2h" x1="0" y1="0" x2="1" y2="0"><stop offset="0" stop-color="#b87800"/><stop offset=".12" stop-color="#f2b400"/><stop offset=".85" stop-color="#f6be10"/><stop offset="1" stop-color="#c88600"/></linearGradient></defs><path fill-rule="evenodd" fill="url(#c2h)" d="M4 7.45 A12.1 6.75 0 1 0 28.2 7.45 A12.1 6.75 0 1 0 4 7.45 Z M5.9 6.9 A10.4 5.2 0 1 1 26.7 6.9 A10.4 5.2 0 1 1 5.9 6.9 Z"/><path d="M15.2 8 Q18.4 11.6 23.4 12.2" fill="none" stroke="#f0b000" stroke-width="1.9" stroke-linecap="round"/><path d="M17.2 5.4 L23.6 2.9" fill="none" stroke="#f3c640" stroke-width="1"/><path d="M9.6 6.7 L17.6 4.9 L18.1 8.5 Z" fill="#f0b000"/><path d="M10.8 6.6 L16.6 5.6 L16.9 7.6 Z" fill="#5e3a00"/><text x="16.3" y="21.3" text-anchor="middle" font-family="Liberation Sans,sans-serif" font-weight="bold" font-style="italic" font-size="6.8" textLength="30" lengthAdjust="spacingAndGlyphs" fill="url(#c2g)" stroke="#d49a00" stroke-width=".25">CAMC</text></svg>
<div class="t n" style="left:1355px;top:718px;font-size:11.5px">ZQMES V2019</div>
</div>
</body></html>
